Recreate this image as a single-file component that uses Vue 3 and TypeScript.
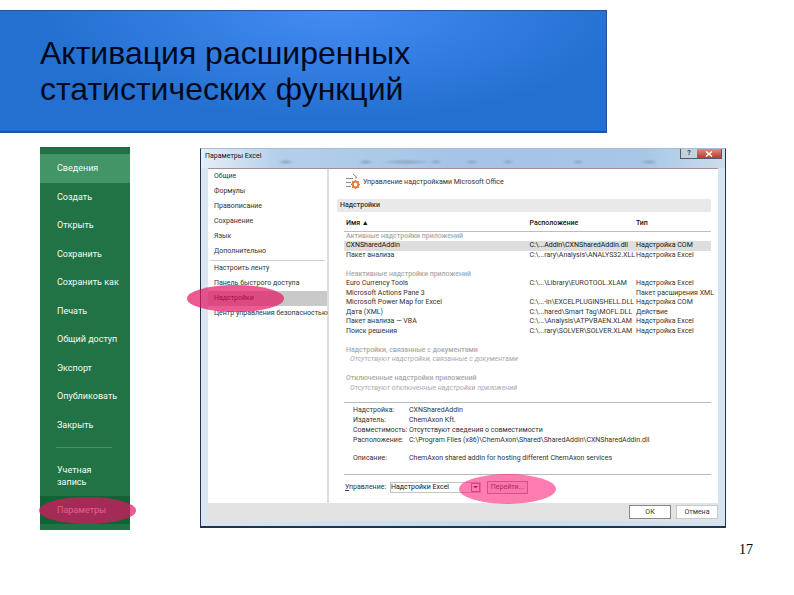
<script setup lang="ts">
import { ref } from 'vue'

interface Addin {
  kind: 'group' | 'item' | 'note' | 'blank'
  name?: string
  path?: string
  type?: string
  selected?: boolean
}

const menu: string[] = [
  'Сведения', 'Создать', 'Открыть', 'Сохранить', 'Сохранить как',
  'Печать', 'Общий доступ', 'Экспорт', 'Опубликовать', 'Закрыть',
]

const sections: string[] = ['Общие', 'Формулы', 'Правописание', 'Сохранение', 'Язык', 'Дополнительно']
const extras: string[] = ['Настроить ленту', 'Панель быстрого доступа', 'Надстройки', 'Центр управления безопасностью']

const addins: Addin[] = [
  { kind: 'group', name: 'Активные надстройки приложений' },
  { kind: 'item', name: 'CXNSharedAddin', path: 'C:\\...Addin\\CXNSharedAddin.dll', type: 'Надстройка COM', selected: true },
  { kind: 'item', name: 'Пакет анализа', path: 'C:\\...rary\\Analysis\\ANALYS32.XLL', type: 'Надстройка Excel' },
  { kind: 'blank' },
  { kind: 'group', name: 'Неактивные надстройки приложений' },
  { kind: 'item', name: 'Euro Currency Tools', path: 'C:\\...\\Library\\EUROTOOL.XLAM', type: 'Надстройка Excel' },
  { kind: 'item', name: 'Microsoft Actions Pane 3', path: '', type: 'Пакет расширения XML' },
  { kind: 'item', name: 'Microsoft Power Map for Excel', path: 'C:\\...-in\\EXCELPLUGINSHELL.DLL', type: 'Надстройка COM' },
  { kind: 'item', name: 'Дата (XML)', path: 'C:\\...hared\\Smart Tag\\MOFL.DLL', type: 'Действие' },
  { kind: 'item', name: 'Пакет анализа — VBA', path: 'C:\\...\\Analysis\\ATPVBAEN.XLAM', type: 'Надстройка Excel' },
  { kind: 'item', name: 'Поиск решения', path: 'C:\\...rary\\SOLVER\\SOLVER.XLAM', type: 'Надстройка Excel' },
  { kind: 'blank' },
  { kind: 'group', name: 'Надстройки, связанные с документами' },
  { kind: 'note', name: 'Отсутствуют надстройки, связанные с документами' },
  { kind: 'blank' },
  { kind: 'group', name: 'Отключенные надстройки приложений' },
  { kind: 'note', name: 'Отсутствуют отключенные надстройки приложений' },
]

const manage = ref('Надстройки Excel')
</script>

<template>
  <div class="slide">
    <header class="banner">
      <h1>Активация расширенных<br />статистических функций</h1>
    </header>

    <main class="content">
      <nav class="backstage" aria-label="Файл">
        <div class="menu">
          <a v-for="(item, i) in menu" :key="item" href="#" :class="{ current: i === 0 }">{{ item }}</a>
        </div>
        <hr />
        <a href="#" class="account">Учетная запись</a>
        <a href="#" class="options">Параметры</a>
        <span class="mark mark-options"></span>
      </nav>

      <section class="dialog" aria-labelledby="dialog-title">
        <div class="titlebar">
          <h2 id="dialog-title">Параметры Excel</h2>
          <div class="window-buttons">
            <button type="button" class="help">?</button>
            <button type="button" class="close" aria-label="Закрыть">
              <svg viewBox="0 0 8 6"><path d="M1 0.5 L7 5.5 M7 0.5 L1 5.5" stroke="#fff" stroke-width="1.6" /></svg>
            </button>
          </div>
        </div>

        <div class="body">
          <div class="panes">
            <nav class="sections" aria-label="Разделы">
              <a v-for="s in sections" :key="s" href="#">{{ s }}</a>
              <hr />
              <a v-for="s in extras" :key="s" href="#" :class="{ active: s === 'Надстройки' }">{{ s }}</a>
              <span class="mark mark-addins"></span>
            </nav>

            <div class="pane">
              <div class="heading">
                <svg class="heading-icon" viewBox="0 0 14 17" fill="none">
                  <path d="M0 5.5H7M0 9.5H5M0 13.5H5" stroke="#8a8a8a" />
                  <path d="M7 1L11 4.500L9 5" stroke="#8a8a8a" />
                  <circle cx="9.500" cy="11.500" r="2.800" stroke="#e07a3c" stroke-width="1.800" />
                  <path d="M9.500 7V8.500M9.500 14.500V16M5 11.500H6.500M12.500 11.500H14M6.300 8.300L7.400 9.400M11.600 13.600L12.700 14.700M12.700 8.300L11.600 9.400M7.400 13.600L6.300 14.700" stroke="#e07a3c" stroke-width="1.400" />
                </svg>
                <h3>Управление надстройками Microsoft Office</h3>
              </div>
              <h4>Надстройки</h4>

              <table>
                <thead>
                  <tr><th class="col-name">Имя ▲</th><th class="col-path">Расположение</th><th>Тип</th></tr>
                </thead>
                <tbody>
                  <tr v-for="(row, i) in addins" :key="i" :class="[row.kind, { selected: row.selected }]">
                    <template v-if="row.kind === 'item'">
                      <td>{{ row.name }}</td>
                      <td>{{ row.path }}</td>
                      <td>{{ row.type }}</td>
                    </template>
                    <td v-else colspan="3">{{ row.name }}</td>
                  </tr>
                </tbody>
              </table>

              <dl>
                <dt>Надстройка:</dt><dd>CXNSharedAddin</dd>
                <dt>Издатель:</dt><dd>ChemAxon Kft.</dd>
                <dt>Совместимость:</dt><dd>Отсутствуют сведения о совместимости</dd>
                <dt>Расположение:</dt><dd>C:\Program Files (x86)\ChemAxon\Shared\SharedAddin\CXNSharedAddin.dll</dd>
                <dt class="spaced">Описание:</dt><dd class="spaced">ChemAxon shared addin for hosting different ChemAxon services</dd>
              </dl>

              <div class="manage">
                <label for="manage"><u>У</u>правление:</label>
                <div class="select-box">
                  <select id="manage" v-model="manage">
                    <option>Надстройки Excel</option>
                    <option>Надстройки COM</option>
                  </select>
                  <span class="arrow"></span>
                </div>
                <button type="button">Перейти...</button>
                <span class="mark mark-go"></span>
              </div>
            </div>
          </div>

          <footer class="actions">
            <button type="button" class="ok">ОК</button>
            <button type="button">Отмена</button>
          </footer>
        </div>
      </section>
    </main>

    <p class="page-number">17</p>
  </div>
</template>

<style>
body {
  background: #fff;
}
</style>

<style scoped>
* {
  box-sizing: border-box;
}

.slide {
  padding-top: 10px;
  font-family: Roboto, "Open Sans", sans-serif;
  color: #333;
}

h1, h2, h3, h4, p, dl, dd {
  margin: 0;
  font-weight: 400;
}

a {
  color: inherit;
  text-decoration: none;
}

button, select {
  font: inherit;
  color: inherit;
  margin: 0;
  padding: 0;
}

.banner {
  margin-right: 187px;
  padding: 24px 40px;
  border: 1px solid #2b4f9c;
  border-width: 1px 1px 2px 0;
  background: radial-gradient(ellipse 300px 110px at 335px 0, #448bf2, #2370d0);
}

h1 {
  font: 32px/36px "Liberation Sans", Arial, sans-serif;
  color: #02091c;
}

.content {
  display: flex;
  align-items: flex-start;
  gap: 70px;
  padding: 14px 68px 0 40px;
}

.backstage {
  position: relative;
  flex: none;
  width: 90px;
  padding: 6px 0;
  background: #217346;
  border-top: 1px solid #1c6a49;
  color: #f3fbf5;
  font-size: 9px;
  line-height: 12px;
}

.menu {
  display: grid;
  grid-template-rows: repeat(10, 1fr);
  height: 285px;
}

.menu a {
  display: flex;
  align-items: center;
  padding-left: 17px;
  white-space: nowrap;
}

.menu .current {
  background: #439467;
}

.backstage hr {
  margin: 8px 18px 16px 16px;
  border: 0;
  border-top: 1px solid #4b9068;
}

.account {
  display: block;
  padding: 0 30px 8px 17px;
}

.options {
  display: block;
  padding: 8px 0 8px 17px;
  background: #0f6334;
}

.mark {
  position: absolute;
  border-radius: 50%;
  pointer-events: none;
  background: rgba(228, 20, 100, 0.7);
}

.mark-options {
  left: -1px;
  bottom: 6px;
  width: 97px;
  height: 27px;
}

.mark-addins {
  left: -21px;
  top: 116px;
  width: 97px;
  height: 27px;
}

.mark-go {
  left: 115px;
  top: -1px;
  width: 97px;
  height: 30px;
  background: rgba(255, 30, 120, 0.58);
}

.dialog {
  flex: 1;
  min-width: 0;
  margin-top: 1px;
  padding: 0 7px 5px;
  border: 1px solid #1d3450;
  border-top-color: #a9bdd2;
  border-bottom-width: 2px;
  background: linear-gradient(90deg, #dce5ef, #c8dcec 50%, #d5e4ee);
  font-size: 7px;
  line-height: 9px;
}

.titlebar {
  display: flex;
  justify-content: space-between;
  align-items: flex-start;
  height: 19px;
  margin: 0 -7px;
  padding-left: 4px;
  background:
    radial-gradient(ellipse 8px 3px at 85px 13px, #8fa8c6, transparent),
    radial-gradient(ellipse 8px 3px at 165px 13px, #8fa8c6, transparent),
    radial-gradient(ellipse 26px 3px at 205px 13px, #8fa8c6, transparent),
    radial-gradient(ellipse 6px 3px at 235px 13px, #8fa8c6, transparent),
    radial-gradient(ellipse 7px 3px at 271px 13px, #8fa8c6, transparent),
    radial-gradient(ellipse 6px 3px at 307px 13px, #8fa8c6, transparent),
    radial-gradient(ellipse 6px 3px at 377px 13px, #8fa8c6, transparent),
    radial-gradient(ellipse 9px 3px at 448px 13px, #8fa8c6, transparent),
    linear-gradient(90deg, #e6eef7, #b4cfea 15%, #a5c4e6 50%, #a8c7e7 85%, #ccddec);
}

h2 {
  padding-top: 3px;
  font-size: 7px;
  line-height: 9px;
  color: #111;
}

.window-buttons {
  display: flex;
  height: 10px;
  margin-right: 3px;
  border: 1px solid #4d5b6c;
  border-top: 0;
}

.window-buttons button {
  display: flex;
  align-items: center;
  justify-content: center;
  border: 0;
}

.help {
  width: 16px;
  background: #c6d1de;
  font-weight: 700;
  color: #33425a;
}

.close {
  width: 24px;
  background: linear-gradient(#dd8b84, #c3352f);
}

.close svg {
  width: 8px;
  height: 6px;
}

.body {
  border-top: 1px solid #a68f93;
  background: #fff;
}

.panes {
  display: flex;
  height: 334px;
}

.sections {
  position: relative;
  display: flex;
  flex-direction: column;
  flex: none;
  width: 121px;
  border-right: 2px solid #dedede;
}

.sections a {
  height: 15px;
  padding-left: 6px;
  line-height: 15px;
  white-space: nowrap;
}

.sections hr {
  width: 115px;
  margin: 1px 0 0 2px;
  border: 0;
  border-top: 1px solid #cfcfcf;
}

.sections .active {
  background: #c9c9c9;
  color: #000;
}

.pane {
  flex: 1;
  min-width: 0;
  padding: 4px 7px 0 8px;
}

.heading {
  display: flex;
  align-items: center;
  gap: 3px;
  height: 17px;
  padding-left: 9px;
}

.heading-icon {
  width: 14px;
  height: 17px;
}

h3 {
  font-size: 7px;
  line-height: 12px;
}

h4 {
  margin-top: 9px;
  padding: 2px 3px;
  background: #e9e9e9;
  font-size: 7px;
  font-weight: 500;
  line-height: 9px;
}

table {
  width: calc(100% - 7px);
  margin: 5px 0 0 7px;
  border-collapse: collapse;
  table-layout: fixed;
}

th {
  height: 14px;
  padding: 0 2px;
  border-bottom: 1px solid #bdbdbd;
  font-weight: 500;
  text-align: left;
  color: #111;
}

.col-name {
  width: 50%;
}

.col-path {
  width: 29%;
}

td {
  height: 9px;
  padding: 0 2px;
  line-height: 9px;
  white-space: nowrap;
}

tbody tr:nth-child(even) td {
  height: 10px;
}

.group td {
  font-weight: 500;
  color: #aaa;
}

.note td {
  padding-left: 6px;
  font-style: italic;
  color: #aaa;
}

.selected td {
  background: #dedede;
  color: #111;
}

dl {
  display: grid;
  grid-template-columns: 56px 1fr;
  height: 73px;
  align-content: start;
  margin: 9px 0 0 7px;
  padding: 2px 0 0 9px;
  border: 1px solid #b9b9b9;
  border-width: 1px 0;
  line-height: 10px;
  white-space: nowrap;
}

.spaced {
  margin-top: 8px;
}

.manage {
  position: relative;
  display: flex;
  align-items: center;
  height: 25px;
  margin-left: 7px;
  padding-left: 1px;
}

.manage label {
  width: 45px;
}

.select-box {
  display: flex;
  position: relative;
  width: 91px;
  height: 11px;
  border: 1px solid #c4c4c4;
}

.select-box select {
  width: 100%;
  border: 0;
  appearance: none;
  background: #fff;
  color: #111;
  line-height: 9px;
}

.arrow {
  position: absolute;
  right: 0;
  top: 0;
  width: 9px;
  height: 9px;
  border: 1px solid #888;
}

.arrow::after {
  content: "";
  display: block;
  margin: 2px 1px;
  border: 2px solid transparent;
  border-top-color: #333;
}

.manage button {
  width: 41px;
  height: 13px;
  margin-left: 6px;
  border: 1px solid #999;
  background: #f4f4f4;
}

.actions {
  display: flex;
  justify-content: flex-end;
  gap: 5px;
  padding: 2px 0;
  background: #e3e3e3;
}

.actions button {
  width: 42px;
  height: 14px;
  border: 1px solid #c8c8c8;
  background: #fff;
}

.actions .ok {
  border-color: #888;
}

.page-number {
  padding: 11px 41px 0 0;
  font: 14px/18px "Liberation Serif", "Times New Roman", serif;
  text-align: right;
  color: #000;
}
</style>
